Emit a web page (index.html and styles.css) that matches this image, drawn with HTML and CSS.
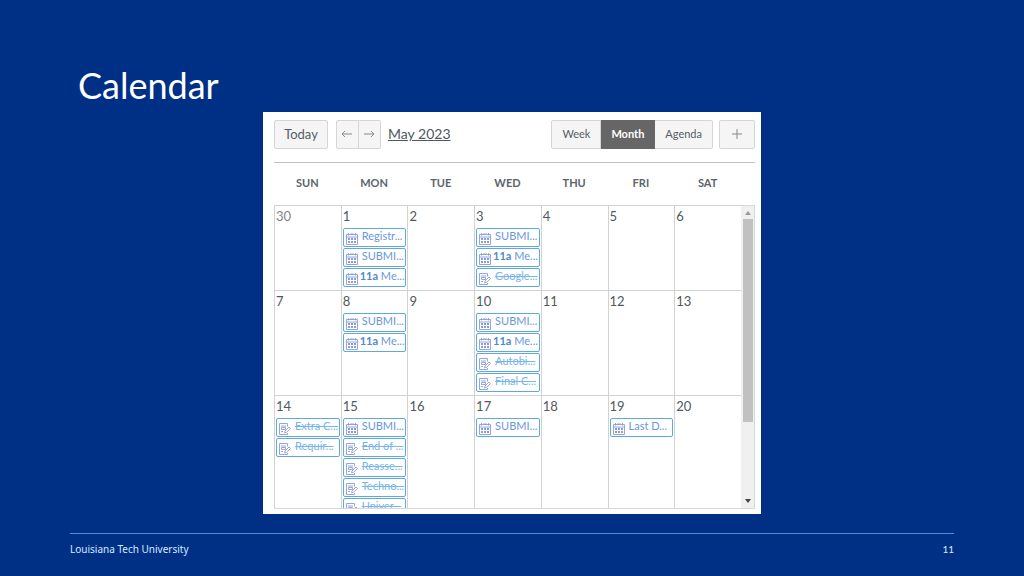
FILE: index.html
```html
<!DOCTYPE html>
<html lang="en">
<head>
    <meta charset="UTF-8">
    <title>Calendar</title>
    <link rel="stylesheet" href="styles.css">
</head>
<body>
<!-- ICONS -->
<svg class="defs" aria-hidden="true">
    <symbol id="cal" viewBox="0 0 12 12">
        <path d="M.5 1.5H11.5V11.5H.5ZM.5 4H11.5M2.500 0V2.500M5 0V2M7 0V2M9.500 0V2.500" fill="none" stroke="currentColor" stroke-width=".9"/>
        <path d="M2 5h2v2H2zM5 5h2v2H5zM8 5h2v2H8zM2 8h2v2H2zM5 8h2v2H5zM8 8h2v2H8z" fill="currentColor"/>
    </symbol>
    <symbol id="task" viewBox="0 0 12 12">
        <path d="M8.5 3.5V.5H.5V11.5H8.5V10M2 3H7M2.500 4.500H6.500V6.500H2.500ZM2 8.500H4" fill="none" stroke="currentColor" stroke-width=".9"/>
        <path d="M5.500 9.800L6 8L10 4L11.500 5.500L7.500 9.400Z" fill="none" stroke="currentColor" stroke-width=".9"/>
    </symbol>
</svg>

<main class="slide">
    <h1>Calendar</h1>

    <section class="panel">
        <div class="toolbar">
            <button class="btn today">Today</button>
            <div class="group arrows">
                <button class="btn" aria-label="Previous"><svg viewBox="0 0 12 12"><path d="M11 6H1M4 3L1 6L4 9"/></svg></button>
                <button class="btn" aria-label="Next"><svg viewBox="0 0 12 12"><path d="M1 6H11M8 3L11 6L8 9"/></svg></button>
            </div>
            <a class="current" href="#">May 2023</a>
            <div class="group views">
                <button class="btn">Week</button>
                <button class="btn active">Month</button>
                <button class="btn">Agenda</button>
            </div>
            <button class="btn add" aria-label="Add event"><svg viewBox="0 0 12 12"><path d="M6 1V11M1 6H11"/></svg></button>
        </div>

        <div class="month">
            <table>
                <thead>
                <tr><th>SUN</th><th>MON</th><th>TUE</th><th>WED</th><th>THU</th><th>FRI</th><th>SAT</th></tr>
                </thead>
                <tbody>
                <tr class="short">
                    <td><span class="day other">30</span></td>
                    <td><span class="day">1</span>
                        <div class="events">
                            <a class="event" href="#"><svg><use href="#cal"/></svg><span>Registr...</span></a>
                            <a class="event" href="#"><svg><use href="#cal"/></svg><span>SUBMI...</span></a>
                            <a class="event timed" href="#"><svg><use href="#cal"/></svg><span><b>11a</b> Me...</span></a>
                        </div>
                    </td>
                    <td><span class="day">2</span></td>
                    <td><span class="day">3</span>
                        <div class="events">
                            <a class="event" href="#"><svg><use href="#cal"/></svg><span>SUBMI...</span></a>
                            <a class="event timed" href="#"><svg><use href="#cal"/></svg><span><b>11a</b> Me...</span></a>
                            <a class="event done" href="#"><svg><use href="#task"/></svg><span>Google...</span></a>
                        </div>
                    </td>
                    <td><span class="day">4</span></td>
                    <td><span class="day">5</span></td>
                    <td><span class="day">6</span></td>
                </tr>
                <tr>
                    <td><span class="day">7</span></td>
                    <td><span class="day">8</span>
                        <div class="events">
                            <a class="event" href="#"><svg><use href="#cal"/></svg><span>SUBMI...</span></a>
                            <a class="event timed" href="#"><svg><use href="#cal"/></svg><span><b>11a</b> Me...</span></a>
                        </div>
                    </td>
                    <td><span class="day">9</span></td>
                    <td><span class="day">10</span>
                        <div class="events">
                            <a class="event" href="#"><svg><use href="#cal"/></svg><span>SUBMI...</span></a>
                            <a class="event timed" href="#"><svg><use href="#cal"/></svg><span><b>11a</b> Me...</span></a>
                            <a class="event done" href="#"><svg><use href="#task"/></svg><span>Autobi...</span></a>
                            <a class="event done" href="#"><svg><use href="#task"/></svg><span>Final C...</span></a>
                        </div>
                    </td>
                    <td><span class="day">11</span></td>
                    <td><span class="day">12</span></td>
                    <td><span class="day">13</span></td>
                </tr>
                <tr>
                    <td><span class="day">14</span>
                        <div class="events">
                            <a class="event done" href="#"><svg><use href="#task"/></svg><span>Extra C...</span></a>
                            <a class="event done" href="#"><svg><use href="#task"/></svg><span>Requir...</span></a>
                        </div>
                    </td>
                    <td><span class="day">15</span>
                        <div class="events">
                            <a class="event" href="#"><svg><use href="#cal"/></svg><span>SUBMI...</span></a>
                            <a class="event done" href="#"><svg><use href="#task"/></svg><span>End of ...</span></a>
                            <a class="event done" href="#"><svg><use href="#task"/></svg><span>Reasse...</span></a>
                            <a class="event done" href="#"><svg><use href="#task"/></svg><span>Techno...</span></a>
                            <a class="event done" href="#"><svg><use href="#task"/></svg><span>Univer...</span></a>
                        </div>
                    </td>
                    <td><span class="day">16</span></td>
                    <td><span class="day">17</span>
                        <div class="events">
                            <a class="event" href="#"><svg><use href="#cal"/></svg><span>SUBMI...</span></a>
                        </div>
                    </td>
                    <td><span class="day">18</span></td>
                    <td><span class="day">19</span>
                        <div class="events">
                            <a class="event" href="#"><svg><use href="#cal"/></svg><span>Last D...</span></a>
                        </div>
                    </td>
                    <td><span class="day">20</span></td>
                </tr>
                </tbody>
            </table>
            <div class="scrollbar">
                <svg viewBox="0 0 6 4"><path d="M0 4L3 0L6 4Z" fill="#999"/></svg>
                <div class="thumb"></div>
                <svg viewBox="0 0 6 4"><path d="M0 0L3 4L6 0Z" fill="#444"/></svg>
            </div>
        </div>
    </section>

    <footer>
        <span>Louisiana Tech University</span>
        <span class="page">11</span>
    </footer>
</main>
</body>
</html>
```
FILE: styles.css
```css
*, *:before, *:after {
    box-sizing: border-box;
}

body {
    margin: 0;
    background: #002f86;
    font-family: Lato, "Liberation Sans", sans-serif;
    color: #4f5860;
}

.defs {
    display: none;
}

.slide {
    padding: 65px 70px 0;
}

h1 {
    margin: 0 0 7px 8px;
    font-size: 36px;
    line-height: 40px;
    font-weight: normal;
    color: #fff;
}

.panel {
    max-width: 498px;
    margin: 0 auto;
    padding: 8px 6px 5px 11px;
    background: #fff;
}

/* TOOLBAR */
.toolbar {
    display: flex;
    align-items: center;
    padding-bottom: 13px;
    border-bottom: 1px solid #c0c3c6;
}

.btn {
    display: flex;
    align-items: center;
    justify-content: center;
    height: 29px;
    padding: 0 10px 2px;
    border: 1px solid #d3d5d7;
    border-radius: 2px;
    background: #f5f5f5;
    font-family: inherit;
    font-size: 11px;
    color: #555d65;
}

.btn svg {
    width: 12px;
    height: 12px;
    fill: none;
    stroke: #858b90;
}

.today {
    width: 54px;
    margin-right: 8px;
    font-size: 13px;
}

.group {
    display: flex;
}

.group .btn + .btn {
    border-left: 0;
    border-top-left-radius: 0;
    border-bottom-left-radius: 0;
}

.group .btn:not(:last-child) {
    border-top-right-radius: 0;
    border-bottom-right-radius: 0;
}

.arrows {
    margin-right: 7px;
}

.arrows .btn {
    padding: 0 5px 2px 4px;
}

.current {
    padding-bottom: 2px;
    font-size: 14px;
    color: #4f5860;
}

.views {
    margin-left: auto;
}

.btn.active {
    background: #666;
    border-color: #666;
    color: #fff;
    font-weight: bold;
}

.add {
    width: 36px;
    margin-left: 6px;
}

/* MONTH GRID */
.month {
    display: flex;
    align-items: flex-start;
    height: 346px;
    overflow: hidden;
    border-bottom: 1px solid #d5d7d9;
}

table {
    width: 100%;
    table-layout: fixed;
    border-collapse: separate;
    border-spacing: 0;
}

th {
    height: 42px;
    padding: 0 0 3px;
    font-size: 11px;
    color: #5b646c;
}

td {
    height: 105px;
    padding: 0 1px;
    vertical-align: top;
    border-top: 1px solid #d0d2d4;
    border-left: 1px solid #d0d2d4;
}

.short td {
    height: 85px;
}

.day {
    display: block;
    height: 22px;
    font-size: 13px;
    line-height: 20px;
}

.other {
    color: #80868b;
}

.events {
    display: flex;
    flex-direction: column;
    gap: 1px;
}

.event {
    display: flex;
    align-items: center;
    gap: 4px;
    height: 19px;
    padding: 0 2px;
    border: 1px solid #5fa8e6;
    border-radius: 2px;
    font-size: 11px;
    line-height: 14px;
    white-space: nowrap;
    color: #6a97dc;
    text-decoration: none;
}

.event svg {
    flex: none;
    width: 12px;
    height: 12px;
    margin-top: 2px;
    color: #8a9cd8;
}

.event span {
    padding-bottom: 3px;
}

.timed {
    gap: 2px;
}

.timed b {
    color: #5088d0;
}

.done span {
    color: #79b4ea;
    text-decoration: line-through;
}

/* SCROLLBAR */
.scrollbar {
    display: flex;
    flex: none;
    flex-direction: column;
    align-items: center;
    width: 14px;
    height: 303px;
    margin-top: 42px;
    padding: 5px 0;
    background: #f0f0f0;
    border-top: 1px solid #d5d7d9;
    border-right: 1px solid #d5d7d9;
}

.scrollbar svg {
    width: 6px;
    height: 4px;
}

.thumb {
    width: 10px;
    height: 203px;
    margin: 4px 0 auto;
    background: #c1c1c1;
}

/* FOOTER */
footer {
    display: flex;
    justify-content: space-between;
    margin-top: 19px;
    padding-top: 7px;
    border-top: 1px solid #5b88cf;
    font-family: "Noto Sans", sans-serif;
    font-size: 10px;
    line-height: 16px;
    color: #d5eaff;
}

.page {
    font-family: Lato, sans-serif;
}
```
